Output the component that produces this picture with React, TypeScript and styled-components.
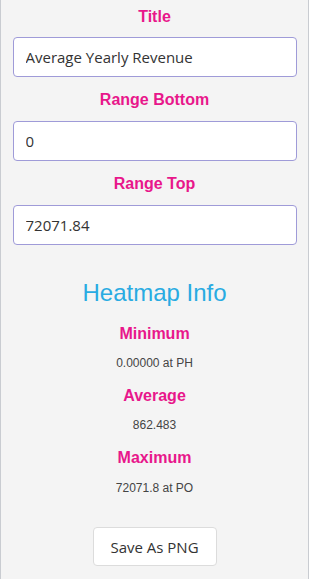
import { Fragment } from "react";
import styled, { createGlobalStyle } from "styled-components";

const Global = createGlobalStyle`
  html, body {
    margin: 0;
    padding: 0;
    background: #f4f4f4;
  }
  #root {
    height: 579px;
  }
`;

const Panel = styled.div`
  box-sizing: border-box;
  width: 309px;
  height: 579px;
  background: #f4f4f4;
  border-left: 1px solid #c9ccd1;
  border-right: 1px solid #c9ccd1;
  padding: 7px 12px 0 12px;
  display: flex;
  flex-direction: column;
  align-items: center;
  font-family: "Liberation Sans", Arial, sans-serif;
`;

const Label = styled.div<{ $top?: number; $bottom?: number }>`
  margin-top: ${(p) => p.$top ?? 0}px;
  margin-bottom: ${(p) => p.$bottom ?? 11}px;
  line-height: 20px;
  font-size: 16px;
  font-weight: bold;
  color: #e8178b;
  text-align: center;
`;

const Input = styled.input`
  box-sizing: border-box;
  width: 284px;
  height: 40px;
  padding: 0 12px;
  border: 1px solid #9f9bd8;
  border-radius: 4px;
  background: #fff;
  font-family: "Open Sans", "Segoe UI", sans-serif;
  font-size: 15px;
  color: #333;
  outline: none;
`;

const Heading = styled.h2`
  margin: 34px 0 0 0;
  line-height: 28px;
  font-size: 24px;
  font-weight: normal;
  color: #29abe2;
`;

const Value = styled.div<{ $top: number }>`
  margin-top: ${(p) => p.$top}px;
  line-height: 16px;
  font-size: 12px;
  color: #444;
`;

const Button = styled.button`
  margin-top: 31px;
  box-sizing: border-box;
  width: 124px;
  height: 39px;
  background: #fff;
  border: 1px solid #dcdcdc;
  border-radius: 4px;
  font-family: "Open Sans", "Segoe UI", sans-serif;
  font-size: 15px;
  color: #333;
`;

const stats = [
  { label: "Minimum", value: "0.00000 at PH" },
  { label: "Average", value: "862.483" },
  { label: "Maximum", value: "72071.8 at PO" },
];

export default function App() {
  return (
    <>
      <Global />
      <Panel>
        <Label $bottom={10}>Title</Label>
        <Input defaultValue="Average Yearly Revenue" />
        <Label $top={13}>Range Bottom</Label>
        <Input defaultValue="0" />
        <Label $top={13}>Range Top</Label>
        <Input defaultValue="72071.84" />
        <Heading>Heatmap Info</Heading>
        {stats.map((s, i) => (
          <Fragment key={s.label}>
            <Label $top={i === 0 ? 17 : 15} $bottom={0}>
              {s.label}
            </Label>
            <Value $top={i === 2 ? 12 : 11}>{s.value}</Value>
          </Fragment>
        ))}
        <Button>Save As PNG</Button>
      </Panel>
    </>
  );
}
